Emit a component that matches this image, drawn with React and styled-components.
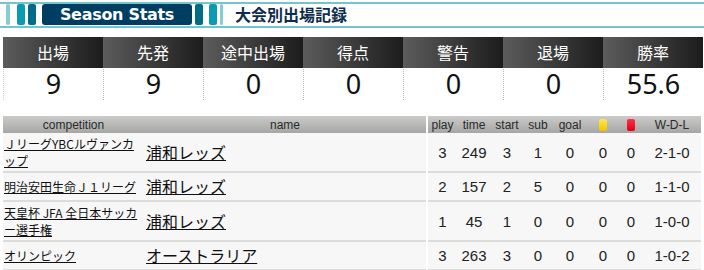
import React from 'react';
import styled, { createGlobalStyle } from 'styled-components';

const GlobalStyle = createGlobalStyle`
  body {
    margin: 0;
    background: #fff;
    font-family: "Noto Sans CJK JP", "Noto Sans", sans-serif;
  }
`;

const Page = styled.div`
  width: 704px;
  padding-top: 2px;
`;

const TitleBar = styled.div`
  display: flex;
  align-items: stretch;
  height: 21px;
  padding: 0 0 1px;
  border-top: 2px solid #72c5ce;
  border-bottom: 2px solid #72c5ce;
  box-sizing: content-box;
`;

const Stripe = styled.span`
  width: ${p => p.$w}px;
  margin-left: ${p => p.$ml}px;
  background: ${p => p.$c};
  border-radius: 2px;
`;

const Badge = styled.span`
  width: 150px;
  margin-left: 6px;
  background: #003e61;
  border-radius: 3px;
  color: #fff;
  font-family: "DejaVu Sans", sans-serif;
  font-weight: bold;
  font-size: 16px;
  letter-spacing: -0.3px;
  line-height: 21px;
  text-align: center;
`;

const Heading = styled.h2`
  margin: 0 0 0 12px;
  font-size: 16px;
  font-weight: bold;
  line-height: 21px;
  color: #0c2d4b;
`;

const StatsGrid = styled.div`
  display: grid;
  grid-template-columns: repeat(7, 100px);
  margin: 9px 0 0 3px;
`;

const StatCell = styled.div`
  display: flex;
  flex-direction: column;
  border-left: 1px dotted #b8b8b8;
  &:first-child { border-left-color: #ccc; }
`;

const StatLabel = styled.div`
  height: 31px;
  line-height: 31px;
  margin-left: -1px;
  background: linear-gradient(to right, #5c5c5c, #1c1c1c);
  color: #fff;
  font-size: 16px;
  text-align: center;
`;

const StatValue = styled.div`
  height: 32px;
  line-height: 32px;
  font-family: "Noto Sans", sans-serif;
  font-size: 27px;
  color: #111;
  text-align: center;
`;

const Records = styled.table`
  table-layout: fixed;
  width: 698px;
  margin: 16px 0 0 3px;
  border-collapse: collapse;
`;

const Head = styled.th`
  height: 17px;
  padding: 0;
  background: linear-gradient(#cbcbc9, #a6a6a4);
  font-family: "Liberation Sans", Arial, sans-serif;
  font-size: 12px;
  font-weight: normal;
  color: #2a2a2a;
  text-align: center;
  border-right: ${p => (p.$split ? '2px solid #fff' : 'none')};
`;

const Row = styled.tr`
  background: #f7f7f7;
  border-bottom: 2px solid #dcdcd8;
`;

const CompCell = styled.td`
  padding: 2px 1px;
  font-size: 12px;
  line-height: 17px;
  vertical-align: middle;
  a { color: #111; text-decoration: underline; }
`;

const NameCell = styled.td`
  padding: 2px 2px;
  font-size: 16px;
  line-height: 23px;
  border-right: 2px solid #fff;
  vertical-align: middle;
  a { color: #111; text-decoration: underline; }
`;

const Num = styled.td`
  padding: 0;
  font-family: "Liberation Sans", Arial, sans-serif;
  font-size: 15px;
  color: #222;
  text-align: center;
  vertical-align: middle;
`;

const Card = styled.span`
  display: inline-block;
  width: 8px;
  height: 12px;
  border-radius: 2px;
  vertical-align: middle;
  background: ${p => (p.$red ? 'linear-gradient(#ff3040, #e0001e)' : 'linear-gradient(#ffe94a, #f2c200)')};
`;

const stats = [
  ['出場', '9'],
  ['先発', '9'],
  ['途中出場', '0'],
  ['得点', '0'],
  ['警告', '0'],
  ['退場', '0'],
  ['勝率', '55.6'],
];

const rows = [
  { comp: 'ＪリーグYBCルヴァンカップ', name: '浦和レッズ', nums: ['3', '249', '3', '1', '0', '0', '0', '2-1-0'] },
  { comp: '明治安田生命Ｊ１リーグ', name: '浦和レッズ', nums: ['2', '157', '2', '5', '0', '0', '0', '1-1-0'] },
  { comp: '天皇杯 JFA 全日本サッカー選手権', name: '浦和レッズ', nums: ['1', '45', '1', '0', '0', '0', '0', '1-0-0'] },
  { comp: 'オリンピック', name: 'オーストラリア', nums: ['3', '263', '3', '0', '0', '0', '0', '1-0-2'] },
];

const widths = [141, 283, 30, 34, 32, 30, 34, 32, 24, 58];

const App = () => (
  <Page>
    <GlobalStyle />
    <TitleBar>
      <Stripe $w={4} $ml={6} $c="#86ccd4" />
      <Stripe $w={8} $ml={7} $c="#0a9bb3" />
      <Stripe $w={8} $ml={3} $c="#006c86" />
      <Badge>Season Stats</Badge>
      <Stripe $w={8} $ml={3} $c="#006c86" />
      <Stripe $w={8} $ml={6} $c="#0a9bb3" />
      <Stripe $w={3} $ml={3} $c="#86ccd4" />
      <Heading>大会別出場記録</Heading>
    </TitleBar>

    <StatsGrid>
      {stats.map(([label, value]) => (
        <StatCell key={label}>
          <StatLabel>{label}</StatLabel>
          <StatValue>{value}</StatValue>
        </StatCell>
      ))}
    </StatsGrid>

    <Records>
      <colgroup>
        {widths.map((w, i) => <col key={i} style={{ width: w }} />)}
      </colgroup>
      <thead>
        <tr>
          <Head>competition</Head>
          <Head $split>name</Head>
          <Head>play</Head>
          <Head>time</Head>
          <Head>start</Head>
          <Head>sub</Head>
          <Head>goal</Head>
          <Head><Card /></Head>
          <Head><Card $red /></Head>
          <Head>W-D-L</Head>
        </tr>
      </thead>
      <tbody>
        {rows.map((r, i) => (
          <Row key={i}>
            <CompCell><a href="#">{r.comp}</a></CompCell>
            <NameCell><a href="#">{r.name}</a></NameCell>
            {r.nums.map((n, j) => <Num key={j}>{n}</Num>)}
          </Row>
        ))}
      </tbody>
    </Records>
  </Page>
);

export default App;
